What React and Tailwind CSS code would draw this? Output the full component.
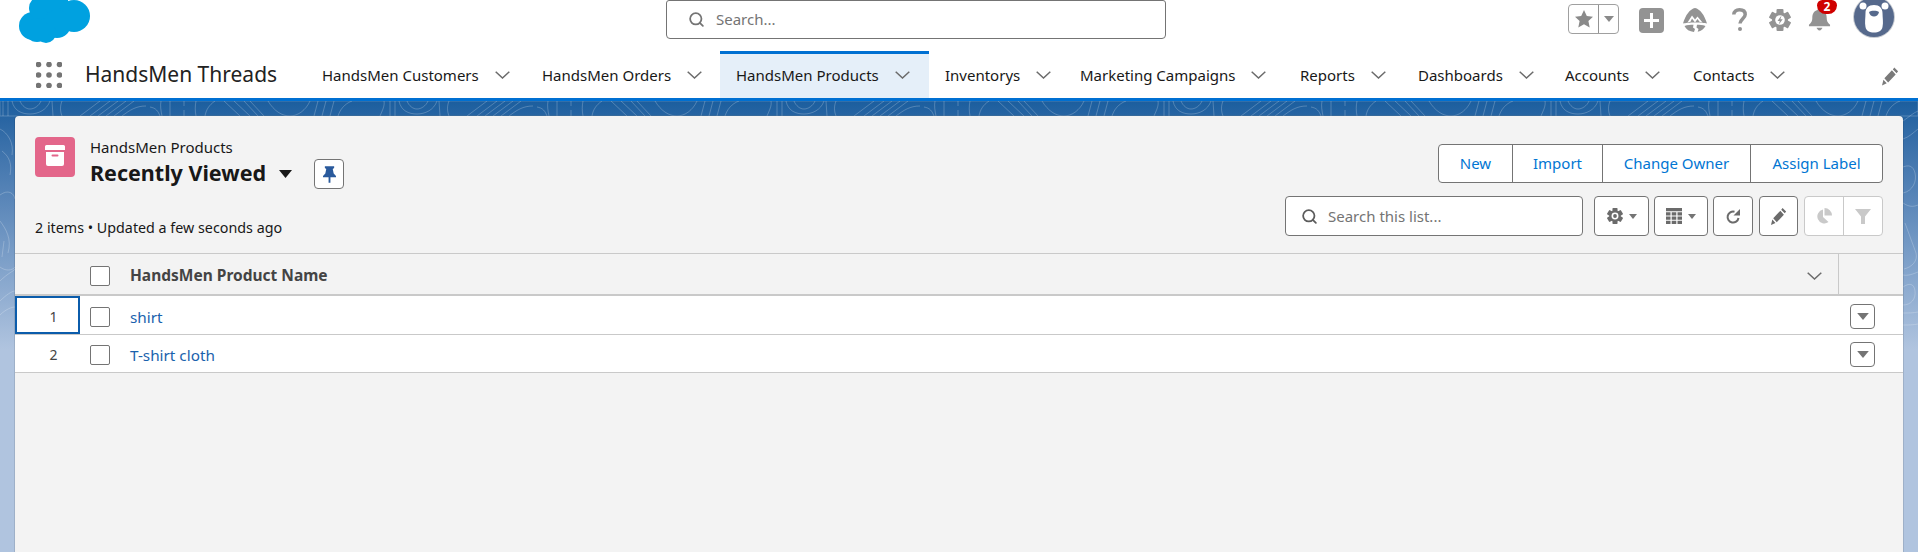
import React from "react";
import { Search } from "lucide-react";

const tabs = [
  { label: "HandsMen Customers", width: "w-[220px]" },
  { label: "HandsMen Orders", width: "w-[194px]" },
  { label: "HandsMen Products", width: "w-[209px]", active: true },
  { label: "Inventorys", width: "w-[135px]" },
  { label: "Marketing Campaigns", width: "w-[220px]" },
  { label: "Reports", width: "w-[118px]" },
  { label: "Dashboards", width: "w-[147px]" },
  { label: "Accounts", width: "w-[128px]" },
  { label: "Contacts", width: "w-[128px]" },
];

function Caret({ className }) {
  return (
    <svg viewBox="0 0 10 6" className={className} fill="currentColor">
      <path d="M0 0h10L5 6z" />
    </svg>
  );
}

function Chevron() {
  return (
    <svg viewBox="0 0 15 8" className="w-[15px] h-[8px] shrink-0" fill="none" stroke="#6b6b6b" strokeWidth="1.500">
      <path d="M.7.7l6.800 6.300L14.300.7" />
    </svg>
  );
}

function CloudLogo() {
  return (
    <svg viewBox="0 0 71 43" className="w-[71px] h-[43px]" fill="#00a1e0">
      <circle cx="14" cy="26" r="14" />
      <circle cx="22" cy="8" r="12" />
      <circle cx="38" cy="5" r="12" />
      <circle cx="55" cy="16" r="16" />
      <circle cx="38" cy="24" r="14" />
      <circle cx="27" cy="33" r="10" />
      <circle cx="18" cy="30" r="12" />
    </svg>
  );
}

function AppGrid() {
  const dots = [2.5, 13, 23.5];
  return (
    <svg viewBox="0 0 26 26" className="w-[26px] h-[26px]" fill="#747474">
      {dots.map((y) => dots.map((x) => <circle key={`${x}-${y}`} cx={x} cy={y} r="2.800" />))}
    </svg>
  );
}

function Trailhead() {
  return (
    <svg viewBox="0 0 24 24" className="w-[24px] h-[24px]">
      <path d="M12 0C7 1 2.500 7 0 15.500c4-1.500 20-1.500 24 0C21.500 7 17 1 12 0z" fill="#939393" />
      <path d="M4.500 14.500L9 7.500l3 4 2.500-3 5 6-3-.8-2-2.700-2.500 3.500-3-4-1.500 3.300z" fill="#fff" />
      <path d="M1.500 18c3-1 6-1.200 9-1.200L10 19.500l2 1.500-1 3C6.500 23.500 3 21.500 1.500 18zM22.500 18c-3-1-6-1.200-8.500-1.200l-.5 2.700 2 1.500-.8 2.800c3.500-.7 6.300-3 7.800-5.800z" fill="#939393" />
    </svg>
  );
}

function Gear({ className, fill = "#939393", bolt }) {
  const angles = [0, 60, 120, 180, 240, 300];
  return (
    <svg viewBox="0 0 22 22" className={className}>
      {angles.map((a) => (
        <rect key={a} x="7.500" y="0" width="7" height="5" rx="1" fill={fill} transform={`rotate(${a} 11 11)`} />
      ))}
      <circle cx="11" cy="11" r="8" fill={fill} />
      <circle cx="11" cy="11" r="4.800" fill="#fff" />
      {bolt ? <path d="M12.500 6.500L8.500 12h2.300l-1 3.500 3.900-5.300h-2.300z" fill={fill} /> : <circle cx="11" cy="11" r="2.600" fill={fill} />}
    </svg>
  );
}

function Bell() {
  return (
    <svg viewBox="0 0 24 24" className="w-[23px] h-[23px]" fill="#939393">
      <path d="M12 0c-1 0-2 .8-2 2C5.500 3 4.500 7 4.500 10.500c0 3-1 5-3.500 7v1.500h22v-1.500c-2.500-2-3.500-4-3.500-7C19.500 7 18.500 3 14 2c0-1.200-1-2-2-2z" />
      <path d="M9 20.500h6c0 .5-1.500 3-3 3s-3-2.500-3-3z" />
    </svg>
  );
}

function Bear() {
  return (
    <svg viewBox="0 0 42 42" className="w-[42px] h-[42px]">
      <circle cx="21" cy="21" r="21" fill="#c8ccd2" />
      <circle cx="21" cy="21" r="20" fill="#56698c" />
      <circle cx="10" cy="10" r="3.500" fill="#fff" />
      <circle cx="32" cy="10" r="3.500" fill="#fff" />
      <path d="M21 9c5.500 0 8.500 3.500 8.500 8 0 5 1 9 0 14-.8 4-4 5.500-8.500 5.500s-7.700-1.500-8.500-5.500c-1-5 0-9 0-14 0-4.500 3-8 8.500-8z" fill="#fff" />
      <path d="M16 16c2-1.800 8-1.800 10 0-.5 3-2.800 4.500-5 4.500s-4.500-1.500-5-4.500z" fill="#56698c" />
    </svg>
  );
}

function PencilIcon({ className, fill }) {
  return (
    <svg viewBox="0 0 18 20" className={className} fill={fill}>
      <path d="M13 1l4 4-1.500 2-4-4zM10.500 4l4 4.500-8 8.500-4-4.500zM1.500 14l3.500 3.800L0 20z" />
    </svg>
  );
}

function Contours() {
  // wood-grain lines behind the panel: a repeating band on top, loose curves in the side gutters
  return (
    <svg className="absolute inset-0 w-full h-full" fill="none" stroke="#fff" strokeOpacity="0.22" strokeWidth="1">
      <defs>
        <pattern id="grain" width="387" height="15" patternUnits="userSpaceOnUse">
          <path d="M3 0v15M8 0v15M12 0c2 10 10 13 18 13s17-4 20-13M20 0c2 5 6 8 10 8s9-3 11-8M52 0l1 15M62 0c-2 5-2 10 0 15" />
          <path d="M100 0L80 15M110 0L90 15M118 0L98 15M126 0L106 15M134 0L114 15" />
          <path d="M122 15c8-6 14-10 24-10M150 6c6 1 8 4 10 9M161 0c-1 5 0 10 1 15M170 0v15M184 0v5M184 9v6M196 0c-1 5-1 10 0 15" />
          <path d="M215 0c-6 4-9 9-10 15M224 0l16 15M234 0l16 15M244 0l14 15M250 0l14 15" />
          <path d="M268 0c6 10 14 15 22 15s16-6 20-15M318 0l-4 15M326 0l-4 15M334 0l-4 15M352 0c-8 3-12 9-14 15M384 0c1 5-2 10-4 15" />
        </pattern>
      </defs>
      <rect width="100%" height="15" fill="url(#grain)" />
      <path d="M0 28c8 4 14 14 12 26M2 50c8 6 10 14 8 24M0 94c8-6 14-2 15 4M0 120c6 8 12 18 8 32M4 140l-2 16M0 180c8-8 14-10 15-12M0 200c6-6 12-10 15-10M0 214c6-6 12-8 15-8M0 166c5 4 12 4 15 0" />
      <path d="M1903 20c6-4 10-8 15-10M1903 38c6-2 10-6 15-10M1903 66c5-2 10-2 12 6s-2 18-12 20M1903 102c6 4 10 4 15 2M1905 122l11 30c2 8-4 14-12 16M1903 186c6-4 11-4 12 4s-4 14-12 14M1903 174c5 1 10-1 15-3M1903 212c6 0 10 0 15-1M1903 224c6 0 10 0 15-1" />
    </svg>
  );
}

function ToolButton({ className = "", children }) {
  return (
    <button className={`h-[40px] flex items-center justify-center gap-[6px] bg-white border border-[#747474] rounded-[4px] ${className}`}>
      {children}
    </button>
  );
}

function Checkbox() {
  return <span className="block w-[20px] h-[20px] bg-white border border-[#747474] rounded-[2px]" />;
}

function Row({ num, name, height, focused }) {
  return (
    <div className={`grid grid-cols-[65px_41px_1fr_64px] items-center bg-white border-b border-[#c9c9c9] ${height}`}>
      <span className={`h-full flex items-center justify-center pl-[12px] pt-[2px] text-[14px] text-[#444] ${focused ? "border-2 border-[#0b5cab]" : ""}`}>
        {num}
      </span>
      <span className="pl-[10px] pt-[3px]">
        <Checkbox />
      </span>
      <a className="pl-[9px] pt-[4px] text-[15.300px] text-[#1a62ad]">{name}</a>
      <span className="pl-[11px] pt-[2px]">
        <button className="w-[25px] h-[25px] flex items-center justify-center bg-white border border-[#747474] rounded-[4px]">
          <Caret className="w-[12px] h-[7px] text-[#747474]" />
        </button>
      </span>
    </div>
  );
}

export default function App() {
  return (
    <div className="h-[552px] flex flex-col overflow-hidden text-[#181818] font-['Noto_Sans','Open_Sans',sans-serif]">
      <header className="bg-white border-b-[3px] border-[#0070d2]">
        <div className="h-[51px] flex items-start overflow-hidden">
          <div className="ml-[19px]">
            <CloudLogo />
          </div>
          <div className="ml-[576px] w-[500px] h-[39px] flex items-center gap-[11px] pl-[21px] border border-[#747474] rounded-b-[4px] rounded-t-[3px]">
            <Search className="w-[17px] h-[17px] text-[#747474]" strokeWidth={2.500} />
            <span className="text-[15px] text-[#747474]">Search...</span>
          </div>
          <div className="ml-[402px] mt-[4px] w-[51px] h-[30px] flex items-center border border-[#a0a0a0] rounded-[4px]">
            <span className="w-[30px] h-full flex items-center justify-center border-r border-[#939393]">
              <svg viewBox="0 0 20 20" className="w-[20px] h-[20px]" fill="#8a8a8a">
                <path d="M10 1l2.800 6 6.200.7-4.600 4.300 1.300 6.500L10 15.200 4.300 18.500 5.600 12 1 7.700 7.200 7z" />
              </svg>
            </span>
            <Caret className="ml-[5px] w-[10px] h-[6px] text-[#8a8a8a]" />
          </div>
          <div className="ml-[20px] mt-[8px] w-[25px] h-[25px] rounded-[4px] bg-[#939393] flex items-center justify-center">
            <svg viewBox="0 0 15 15" className="w-[15px] h-[15px]" fill="#fff">
              <path d="M6 0h3v6h6v3H9v6H6V9H0V6h6z" />
            </svg>
          </div>
          <div className="ml-[19px] mt-[8px]">
            <Trailhead />
          </div>
          <div className="ml-[25px] mt-[8px]">
            <svg viewBox="0 0 15 23" className="w-[15px] h-[23px]" fill="none" stroke="#939393" strokeWidth="3.500">
              <path d="M1.800 6.500C1.800 3.500 4 1.800 7.500 1.800s5.700 1.700 5.700 4.700c0 4-5 4.500-5.200 9" />
              <circle cx="8" cy="21" r="2" fill="#939393" stroke="none" />
            </svg>
          </div>
          <div className="ml-[22px] mt-[9px]">
            <Gear className="w-[22px] h-[22px]" bolt />
          </div>
          <div className="relative ml-[17px] mt-[8px]">
            <Bell />
            <span className="absolute -top-[8px] left-[9px] w-[20px] h-[14px] rounded-b-[10px] rounded-t-[6px] bg-[#cf0000] text-white text-[12px] font-bold flex items-center justify-center leading-none">
              2
            </span>
          </div>
          <div className="ml-[22px] -mt-[4px]">
            <Bear />
          </div>
        </div>
        <nav className="h-[47px] flex items-stretch">
          <div className="ml-[36px] self-center">
            <AppGrid />
          </div>
          <span className="ml-[23px] w-[221px] self-center mt-[1px] text-[21px] text-[#222]">HandsMen Threads</span>
          {tabs.map((tab) => (
            <a
              key={tab.label}
              className={`${tab.width} flex items-center gap-[16px] pl-[16px] pb-[2px] border-t-[3px] text-[15px] ${
                tab.active ? "border-[#0070d2] bg-[#e5eff9]" : "border-transparent"
              }`}
            >
              {tab.label}
              <Chevron />
            </a>
          ))}
          <div className="ml-auto mr-[19px] self-center mt-[3px]">
            <PencilIcon className="w-[17px] h-[20px]" fill="#7a7a7a" />
          </div>
        </nav>
      </header>

      <main className="relative flex-1 flex flex-col px-[15px] pt-[15px] bg-gradient-to-b from-[#1b5e9e] to-[#b0c4df] to-[55%]">
        <Contours />
        <section className="relative flex-1 bg-[#f3f3f3] rounded-t-[4px] shadow-[0_0_0_1px_rgba(0,0,0,0.1)]">
          <div className="h-[138px] flex justify-between px-[20px] border-b border-[#c9c9c9]">
            <div className="pt-[21px] flex flex-col">
              <div className="flex">
                <div className="w-[40px] h-[40px] rounded-[4px] bg-[#e3668a] flex items-center justify-center">
                  <svg viewBox="0 0 24 24" className="w-[24px] h-[24px]" fill="#fff">
                    <path d="M2 1.500A1.500 1.500 0 0 1 3.500 0h17A1.500 1.500 0 0 1 22 1.500V5H2zM3 7h18v12a2 2 0 0 1-2 2H5a2 2 0 0 1-2-2z" />
                    <rect x="8.500" y="9.500" width="7" height="2" rx="1" fill="#e3668a" />
                  </svg>
                </div>
                <div className="ml-[15px]">
                  <div className="text-[15px] leading-[20px]">HandsMen Products</div>
                  <div className="flex items-start h-[32px]">
                    <span className="text-[21.500px] leading-[32px] font-bold">Recently Viewed</span>
                    <Caret className="ml-[13px] mt-[13px] w-[13px] h-[8px] text-[#181818]" />
                    <button className="ml-[22px] mt-[2px] w-[30px] h-[30px] flex items-center justify-center bg-white border border-[#747474] rounded-[4px]">
                      <svg viewBox="0 0 14 18" className="w-[13px] h-[17px]" fill="#2a5a9c">
                        <path d="M2 0h10v2l-1.500 1 1 5 2.500 2.500V12H8v6H6v-6H0v-1.500L2.500 8l1-5L2 2z" />
                      </svg>
                    </button>
                  </div>
                </div>
              </div>
              <div className="mt-[29px] text-[14.300px] leading-[20px]">2 items • Updated a few seconds ago</div>
            </div>

            <div className="pt-[28px] flex flex-col items-end gap-[13px]">
              <div className="h-[39px] flex bg-white border border-[#747474] rounded-[4px] text-[15px] text-[#0176d3]">
                <span className="w-[74px] flex items-center justify-center border-r border-[#747474]">New</span>
                <span className="w-[90px] flex items-center justify-center border-r border-[#747474]">Import</span>
                <span className="w-[148px] flex items-center justify-center border-r border-[#747474]">Change Owner</span>
                <span className="w-[131px] flex items-center justify-center">Assign Label</span>
              </div>
              <div className="flex h-[40px]">
                <div className="w-[298px] h-[40px] flex items-center gap-[10px] pl-[15px] bg-white border border-[#747474] rounded-[4px]">
                  <Search className="w-[17px] h-[17px] text-[#5c5c5c]" strokeWidth={2.500} />
                  <span className="text-[15px] text-[#747474]">Search this list...</span>
                </div>
                <ToolButton className="ml-[11px] w-[55px]">
                  <Gear className="w-[16px] h-[16px]" fill="#6b6b6b" />
                  <Caret className="w-[8px] h-[5px] text-[#747474]" />
                </ToolButton>
                <ToolButton className="ml-[5px] w-[54px]">
                  <svg viewBox="0 0 16 16" className="w-[16px] h-[17px]" fill="#6b6b6b" preserveAspectRatio="none">
                    <path d="M0 0h16v3H0zM0 4h4.500v3H0zM5.700 4h4.600v3H5.700zM11.500 4H16v3h-4.500zM0 8h4.500v3H0zM5.700 8h4.600v3H5.700zM11.500 8H16v3h-4.500zM0 12h4.500v3H0zM5.700 12h4.600v3H5.700zM11.500 12H16v3h-4.500z" />
                  </svg>
                  <Caret className="w-[8px] h-[5px] text-[#747474]" />
                </ToolButton>
                <ToolButton className="ml-[5px] w-[40px]">
                  <svg viewBox="0 0 16 16" className="w-[16px] h-[16px]" fill="none" stroke="#6b6b6b" strokeWidth="2">
                    <path d="M13.500 10A5.500 5.500 0 1 1 9.500 3.700" />
                    <path d="M15 1v6.500H8.500z" fill="#6b6b6b" stroke="none" />
                  </svg>
                </ToolButton>
                <ToolButton className="ml-[6px] w-[39px]">
                  <PencilIcon className="w-[16px] h-[18px]" fill="#6b6b6b" />
                </ToolButton>
                <div className="ml-[6px] w-[79px] h-[40px] flex bg-white border border-[#c9c9c9] rounded-[4px]">
                  <span className="w-[39px] flex items-center justify-center border-r border-[#c9c9c9]">
                    <svg viewBox="0 0 16 16" className="w-[16px] h-[16px]" fill="#c9c9c9">
                      <path d="M7 1.500v7.500l5.500 5A7 7 0 1 1 7 1.500zM8.500 0A7.500 7.500 0 0 1 16 7.500H8.500z" />
                    </svg>
                  </span>
                  <span className="flex-1 flex items-center justify-center">
                    <svg viewBox="0 0 16 16" className="w-[16px] h-[16px]" fill="#c9c9c9">
                      <path d="M0 1h16L10 8.500V16H6V8.500z" />
                    </svg>
                  </span>
                </div>
              </div>
            </div>
          </div>

          <div className="h-[42px] grid grid-cols-[65px_41px_1fr_64px] items-center border-b-2 border-[#c9c9c9]">
            <span />
            <span className="pl-[10px] pt-[4px]">
              <Checkbox />
            </span>
            <div className="h-full flex items-center justify-between pl-[9px] pr-[16px] pt-[4px] border-r border-[#c9c9c9] text-[15.500px] font-bold text-[#444]">
              HandsMen Product Name
              <Chevron />
            </div>
            <span />
          </div>
          <Row num="1" name="shirt" height="h-[39px]" focused />
          <Row num="2" name="T-shirt cloth" height="h-[38px]" />
        </section>
      </main>
    </div>
  );
}
